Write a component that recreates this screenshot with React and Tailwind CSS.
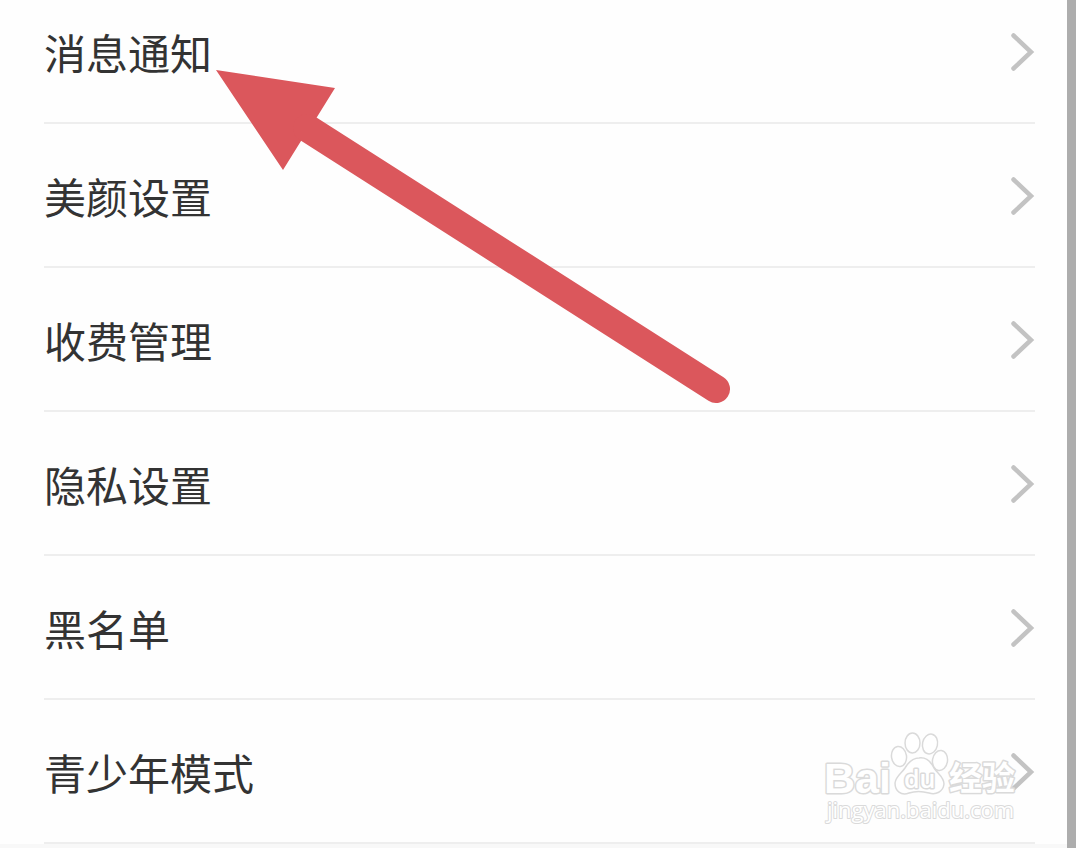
import React from 'react';

const items = ['消息通知', '美颜设置', '收费管理', '隐私设置', '黑名单', '青少年模式'];

function Chevron() {
  return (
    <svg className="w-6 h-10 shrink-0" viewBox="0 0 24 40" fill="none" aria-hidden="true">
      <path d="M2.500 4.500 L20 21 L2.500 37.500" stroke="#c3c3c3" strokeWidth="4.500" strokeLinecap="round" strokeLinejoin="miter" />
    </svg>
  );
}

function SettingRow({ label }) {
  return (
    <li className="border-b-2 border-[#eeeeee]">
      <button type="button" className="flex w-full h-[142px] items-center justify-between text-left">
        <span className="pt-0.5 text-[42px] leading-[60px] text-[#333333]">{label}</span>
        <Chevron />
      </button>
    </li>
  );
}

function Arrow() {
  return (
    <svg
      className="absolute left-[216px] top-[69px] w-[516px] h-[336px] pointer-events-none"
      viewBox="216 69 516 336"
      aria-hidden="true"
    >
      <path d="M216 70 L335 88 L317 117 L301 141 L283 170 Z" fill="#db575c" />
      <path d="M307 128 L716 389" stroke="#db575c" strokeWidth="28" strokeLinecap="round" />
    </svg>
  );
}

function Watermark() {
  return (
    <svg
      className="absolute right-[43px] bottom-[20px] w-[204px] h-[98px] pointer-events-none"
      viewBox="820 730 204 98"
      fill="#ffffff"
      stroke="#dadada"
      strokeWidth="1.500"
      strokeLinejoin="round"
      aria-hidden="true"
    >
      <text x="824" y="793" fontSize="43" fontWeight="700" strokeWidth="3" paintOrder="stroke" className="font-['Liberation_Sans',sans-serif]">Bai</text>
      <ellipse cx="899" cy="756.500" rx="7.500" ry="10" transform="rotate(-8 899 756.500)" />
      <ellipse cx="912.500" cy="743" rx="7.500" ry="10" />
      <ellipse cx="930" cy="744" rx="7.500" ry="10" transform="rotate(12 930 744)" />
      <ellipse cx="940" cy="760.500" rx="7.500" ry="10" transform="rotate(8 940 760.500)" />
      <path d="M919 758 C926 757 931 762 934 768 C938 774 944 777 944 784 C943 792 936 795 929 793 C922 791 915 791 909 793 C901 796 895 791 895 783 C896 776 901 774 905 768 C908 763 912 758 919 758 Z" />
      <text x="904" y="788" fontSize="25" fontWeight="600" strokeWidth="3" paintOrder="stroke" className="font-['Open_Sans',sans-serif]">du</text>
      <text x="949" y="790" fontSize="33" fontWeight="700" strokeWidth="3" paintOrder="stroke" className="font-['Noto_Sans_CJK_SC',sans-serif]">经验</text>
      <text x="827" y="818" fontSize="22" fontWeight="400" strokeWidth="2" paintOrder="stroke" className="font-['Open_Sans',sans-serif]">jingyan.baidu.com</text>
    </svg>
  );
}

export default function App() {
  return (
    <div className="relative h-screen overflow-hidden border-r-9 border-[#adadad] bg-[#f8f8f8] font-['Noto_Sans_CJK_SC',sans-serif]">
      {/* the list is scrolled a little past its first row's top */}
      <ul className="-mt-5 bg-[#fefefe] pl-11 pr-8">
        {items.map((label) => (
          <SettingRow key={label} label={label} />
        ))}
      </ul>
      <Watermark />
      <Arrow />
    </div>
  );
}
